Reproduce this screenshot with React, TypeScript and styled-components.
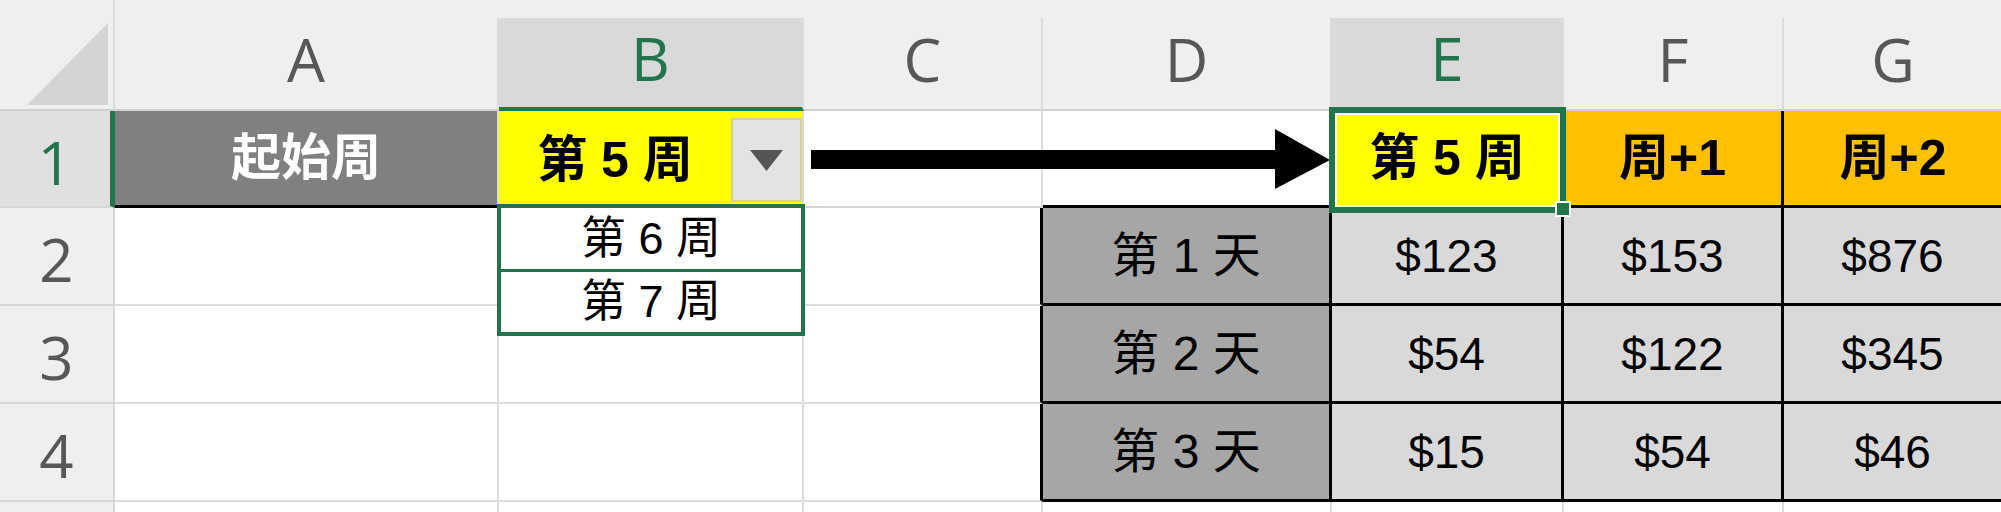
import React from "react";
import styled, { createGlobalStyle } from "styled-components";

const GREEN = "#22744a";
const INK = "#000";
const GRID = "#dcdcdc";

const COLS = [115, 384, 305, 239, 289, 232, 220, 220];
const ROWS = [111, 97, 98, 98, 98, 98];

const GlobalStyle = createGlobalStyle`
  *, *::before, *::after {
    box-sizing: border-box;
  }

  html, body {
    margin: 0;
    padding: 0;
    background: #fff;
    overflow: hidden;
  }

  body {
    font-family: "Liberation Sans", "Noto Sans CJK SC", sans-serif;
  }
`;

const Sheet = styled.div`
  display: grid;
  grid-template-columns: ${COLS.map((w) => `${w}px`).join(" ")};
  grid-template-rows: ${ROWS.map((h) => `${h}px`).join(" ")};
  width: max-content;
`;

const Corner = styled.div`
  display: flex;
  align-items: flex-end;
  justify-content: flex-end;
  padding: 0 5px 4px 0;
  background: #efefef;
  border-right: 2px solid ${GRID};
  border-bottom: 2px solid #d0d0d0;
`;

const CornerMark = styled.div`
  width: 81px;
  height: 82px;
  background: #d4d4d4;
  clip-path: polygon(100% 0, 100% 100%, 0 100%);
`;

const ColHead = styled.div`
  display: flex;
  padding-top: 18px;
  background: #efefef;
`;

const ColLabel = styled.div<{ $active?: boolean }>`
  flex: 1;
  display: flex;
  align-items: center;
  justify-content: center;
  padding-bottom: 10px;
  background: ${(p) => (p.$active ? "#d9d9d9" : "#efefef")};
  border-right: 2px solid ${GRID};
  border-bottom: ${(p) => (p.$active ? `4px solid ${GREEN}` : "2px solid #d0d0d0")};
  font-family: "Open Sans", sans-serif;
  font-size: 60px;
  line-height: 1;
  color: ${(p) => (p.$active ? GREEN : "#575757")};
`;

const RowHead = styled.div<{ $active?: boolean }>`
  display: flex;
  align-items: center;
  justify-content: center;
  padding-top: 6px;
  background: ${(p) => (p.$active ? "#e0e0e0" : "#efefef")};
  border-right: ${(p) => (p.$active ? `5px solid ${GREEN}` : "2px solid #d6d6d6")};
  border-bottom: 2px solid #d6d6d6;
  font-family: "Open Sans", sans-serif;
  font-size: 60px;
  line-height: 1;
  color: ${(p) => (p.$active ? GREEN : "#575757")};
`;

type CellProps = {
  $bg?: string;
  $color?: string;
  $right?: string;
  $bottom?: string;
};

const Cell = styled.div<CellProps>`
  display: flex;
  align-items: center;
  justify-content: center;
  background: ${(p) => p.$bg ?? "#fff"};
  color: ${(p) => p.$color ?? "#000"};
  border-right: ${(p) => (p.$right ? `3px solid ${p.$right}` : `2px solid ${GRID}`)};
  border-bottom: ${(p) => (p.$bottom ? `3px solid ${p.$bottom}` : `2px solid ${GRID}`)};
  font-size: 46px;
  line-height: 1;
  white-space: pre;
`;

const TitleCell = styled(Cell)`
  font-size: 50px;
  font-weight: 700;
`;

const DayCell = styled(Cell)`
  background: #a6a6a6;
  font-size: 48px;
`;

const AmountCell = styled(Cell)`
  background: #d9d9d9;
`;

// B1: the cell with a list validation dropdown
const PickerCell = styled(Cell)`
  position: relative;
  align-items: stretch;
  padding: 7px 0 4px 0;
  background: #ffff00;
`;

const PickerValue = styled.span`
  flex: 1;
  display: flex;
  align-items: center;
  justify-content: center;
  font-size: 50px;
  font-weight: 700;
`;

const DropButton = styled.div`
  width: 71px;
  display: flex;
  align-items: center;
  justify-content: center;
  background: #e3e3e3;
  border: 2px solid #d4d48e;
`;

const PickerList = styled.div`
  position: absolute;
  top: 93px;
  left: -2px;
  z-index: 3;
  width: 308px;
  height: 132px;
  display: flex;
  flex-direction: column;
  background: #fff;
  border: 4px solid ${GREEN};
`;

const PickerOption = styled.div<{ $divider?: boolean }>`
  flex: 1;
  display: flex;
  align-items: center;
  justify-content: center;
  font-size: 45px;
  font-weight: 400;
  border-bottom: ${(p) => (p.$divider ? `3px solid ${GREEN}` : "none")};
`;

const ArrowCell = styled(Cell)`
  position: relative;
  border-bottom-color: #d6d6d6;
`;

const ArrowMark = styled.svg`
  position: absolute;
  top: 18px;
  left: 7px;
  z-index: 2;
`;

const SelectedCell = styled(TitleCell)`
  position: relative;
  background: #ffff00;
`;

const Selection = styled.div`
  position: absolute;
  top: -4px;
  left: -3px;
  right: -4px;
  bottom: -8px;
  z-index: 3;
  border: 6px solid ${GREEN};
  box-shadow: inset 0 0 0 2px #fff;
  pointer-events: none;
`;

const FillHandle = styled.div`
  position: absolute;
  right: -11px;
  bottom: -10px;
  width: 16px;
  height: 16px;
  background: ${GREEN};
  border: 2px solid #fff;
`;

const columns = ["A", "B", "C", "D", "E", "F", "G"];
const selectedColumns = ["B", "E"];

const days = [
  { label: "第 1 天", values: ["$123", "$153", "$876"] },
  { label: "第 2 天", values: ["$54", "$122", "$345"] },
  { label: "第 3 天", values: ["$15", "$54", "$46"] },
];

const Arrow = () => (
  <ArrowMark width="519" height="60" viewBox="0 0 519 60">
    <rect x="0" y="21" width="466" height="19" fill="#000" />
    <polygon points="464,0 519,31 464,60" fill="#000" />
  </ArrowMark>
);

const DropTriangle = () => (
  <svg width="33" height="21" viewBox="0 0 33 21">
    <polygon points="0,0 33,0 16.5,21" fill="#555" />
  </svg>
);

export default function App() {
  return (
    <>
      <GlobalStyle />
      <Sheet>
        <Corner>
          <CornerMark />
        </Corner>
        {columns.map((c) => (
          <ColHead key={c}>
            <ColLabel $active={selectedColumns.includes(c)}>{c}</ColLabel>
          </ColHead>
        ))}

        <RowHead $active>1</RowHead>
        <TitleCell $bg="#808080" $color="#fff" $bottom={INK}>
          起始周
        </TitleCell>
        <PickerCell>
          <PickerValue>第 5 周</PickerValue>
          <DropButton>
            <DropTriangle />
          </DropButton>
          <PickerList>
            <PickerOption $divider>第 6 周</PickerOption>
            <PickerOption>第 7 周</PickerOption>
          </PickerList>
        </PickerCell>
        <ArrowCell>
          <Arrow />
        </ArrowCell>
        <Cell $bottom={INK} />
        <SelectedCell $bottom={INK}>
          第 5 周
          <Selection>
            <FillHandle />
          </Selection>
        </SelectedCell>
        <TitleCell $bg="#ffc000" $right={INK} $bottom={INK}>
          周+1
        </TitleCell>
        <TitleCell $bg="#ffc000" $bottom={INK}>
          周+2
        </TitleCell>

        {days.map((d, i) => (
          <React.Fragment key={d.label}>
            <RowHead>{i + 2}</RowHead>
            <Cell />
            <Cell />
            <Cell $right={INK} />
            <DayCell $right={INK} $bottom={INK}>
              {d.label}
            </DayCell>
            {d.values.map((v, j) => (
              <AmountCell key={j} $right={INK} $bottom={INK}>
                {v}
              </AmountCell>
            ))}
          </React.Fragment>
        ))}

        {/* row 5 only shows its top edge */}
        <RowHead />
        {columns.map((c) => (
          <Cell key={c} />
        ))}
      </Sheet>
    </>
  );
}
